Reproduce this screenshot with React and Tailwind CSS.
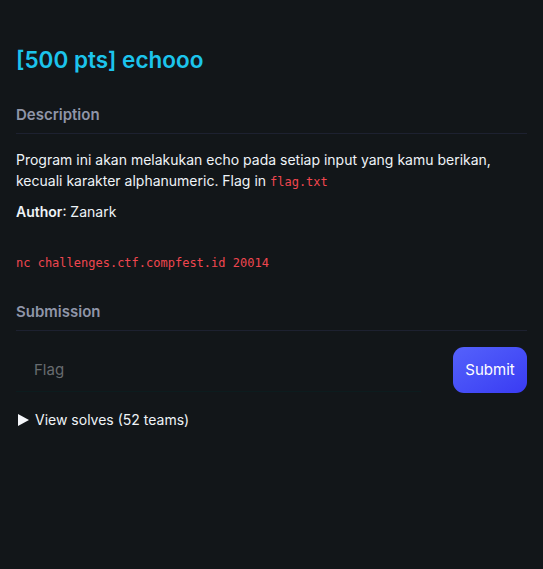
import React from 'react';

export default function App() {
  return (
    <div className="min-h-[569px] w-full bg-[#121619] px-4 pt-[44px] text-white" style={{ fontFamily: 'Inter, "Noto Sans", sans-serif' }}>
      <h1 className="text-[22.5px] font-semibold leading-[32px] text-[#1cc4ec]">[500 pts] echooo</h1>

      <h2 className="mt-[27px] text-[15px] font-semibold leading-[24px] text-[#8f95a8]">Description</h2>
      <div className="mt-[6px] h-px w-full bg-[#1d2130]" />

      <p className="mt-[15px] text-[14px] leading-[21px] text-[#eef3f7]">
        Program ini akan melakukan echo pada setiap input yang kamu berikan,
        <br />
        kecuali karakter alphanumeric. Flag in{' '}
        <code className="text-[12px] text-[#f0464f]" style={{ fontFamily: '"DejaVu Sans Mono", monospace' }}>flag.txt</code>
      </p>
      <p className="mt-[8px] text-[14px] leading-[21px] text-[#eef3f7]">
        <span className="font-semibold">Author</span>: Zanark
      </p>

      <pre className="mt-[32px] text-[12px] leading-[18px] text-[#f0464f]" style={{ fontFamily: '"DejaVu Sans Mono", monospace' }}>nc challenges.ctf.compfest.id 20014</pre>

      <h2 className="mt-[28px] text-[15px] font-semibold leading-[24px] text-[#8f95a8]">Submission</h2>
      <div className="mt-[6px] h-px w-full bg-[#1d2130]" />

      <div className="mt-[16px] flex items-center gap-8">
        <input
          placeholder="Flag"
          className="h-[44px] flex-1 border-b border-[#0c1c1e] bg-transparent px-[18px] text-[15px] text-white outline-none placeholder:text-[#686c70]"
        />
        <button className="h-[46px] w-[74px] rounded-[11px] bg-gradient-to-br from-[#5561fb] to-[#3a3af3] text-[15px] text-white">
          Submit
        </button>
      </div>

      <div className="mt-[17px] flex items-center gap-[6px] pl-[2px] text-[14px] leading-[20px] text-[#eef3f7]">
        <svg width="11" height="12" viewBox="0 0 11 12" className="shrink-0">
          <path d="M0 0 L11 6 L0 12 Z" fill="#f5f7fa" />
        </svg>
        <span>View solves (52 teams)</span>
      </div>
    </div>
  );
}
